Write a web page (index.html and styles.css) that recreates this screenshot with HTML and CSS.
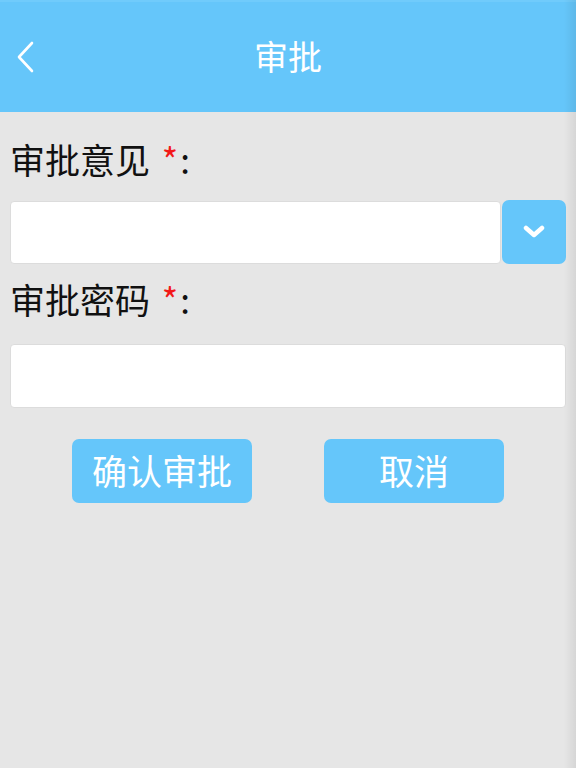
FILE: index.html
```html
<!DOCTYPE html>
<html lang="zh-CN">
<head>
<meta charset="utf-8">
<title>审批</title>
<link rel="stylesheet" href="styles.css">
</head>
<body>
<div class="page">
  <header class="topbar">
    <button class="back" aria-label="返回">
      <svg width="18" height="32" viewBox="0 0 18 32"><path d="M16 2 L3 16 L16 30" fill="none" stroke="#fff" stroke-width="2.6" stroke-linecap="round" stroke-linejoin="round"/></svg>
    </button>
    <h1 class="title">审批</h1>
  </header>

  <main class="form">
    <label class="label">审批意见 <span class="req">*</span>:</label>
    <div class="select-row">
      <div class="field"></div>
      <button class="drop" aria-label="展开">
        <svg width="22" height="14" viewBox="0 0 22 14"><path d="M3 3 L11 10 L19 3" fill="none" stroke="#fff" stroke-width="4.5" stroke-linecap="round" stroke-linejoin="round"/></svg>
      </button>
    </div>

    <label class="label label-second">审批密码 <span class="req">*</span>:</label>
    <div class="field field-wide"></div>

    <div class="actions">
      <button class="btn">确认审批</button>
      <button class="btn">取消</button>
    </div>
  </main>
  <div class="edge-shade"></div>
</div>
</body>
</html>
```

FILE: styles.css
```css
* { box-sizing: border-box; }

html, body {
  margin: 0;
  padding: 0;
  height: 100%;
}

body {
  background: #e6e6e6;
  font-family: "Noto Sans CJK SC", "Noto Sans", sans-serif;
}

.page {
  position: relative;
  min-height: 768px;
  overflow: hidden;
}

.topbar {
  height: 112px;
  background: #65c6fa;
  border-top: 2px solid #70cbfb;
  display: flex;
  align-items: center;
  justify-content: center;
  position: relative;
}

.back {
  position: absolute;
  left: 16px;
  top: 38px;
  background: none;
  border: 0;
  padding: 0;
  width: 20px;
  height: 34px;
  display: flex;
  align-items: center;
}

.title {
  margin: 0;
  font-size: 34px;
  font-weight: 400;
  color: #fff;
  line-height: 1;
  margin-top: -2px;
}

.form {
  padding: 25px 10px 0 10px;
  display: flex;
  flex-direction: column;
}

.label {
  font-size: 35px;
  line-height: 44px;
  color: #111;
  height: 63px;
}

.label-second {
  margin-top: 13px;
}

.req {
  color: #f21818;
  margin-left: 4px;
  margin-right: 2px;
}

.select-row {
  display: flex;
  gap: 1px;
  height: 64px;
}

.field {
  flex: 1;
  height: 63px;
  margin-top: 1px;
  background: #fff;
  border-radius: 4px;
  border: 1px solid #dcdcdc;
}

.field-wide {
  flex: none;
  height: 64px;
  margin-top: 4px;
}

.drop {
  width: 64px;
  height: 64px;
  border: 0;
  border-radius: 7px;
  background: #65c6fa;
  display: flex;
  align-items: center;
  justify-content: center;
  padding: 0;
}

.actions {
  display: flex;
  justify-content: center;
  gap: 72px;
  margin-top: 31px;
}

.btn {
  width: 180px;
  height: 64px;
  border: 0;
  border-radius: 7px;
  background: #65c6fa;
  color: #fff;
  font-family: inherit;
  font-size: 35px;
  line-height: 1;
  padding: 0 0 4px 0;
}

.edge-shade {
  position: absolute;
  top: 0;
  right: 0;
  width: 12px;
  height: 100%;
  background: linear-gradient(to right, rgba(0,0,0,0), rgba(0,0,0,0.07));
  pointer-events: none;
}
```
